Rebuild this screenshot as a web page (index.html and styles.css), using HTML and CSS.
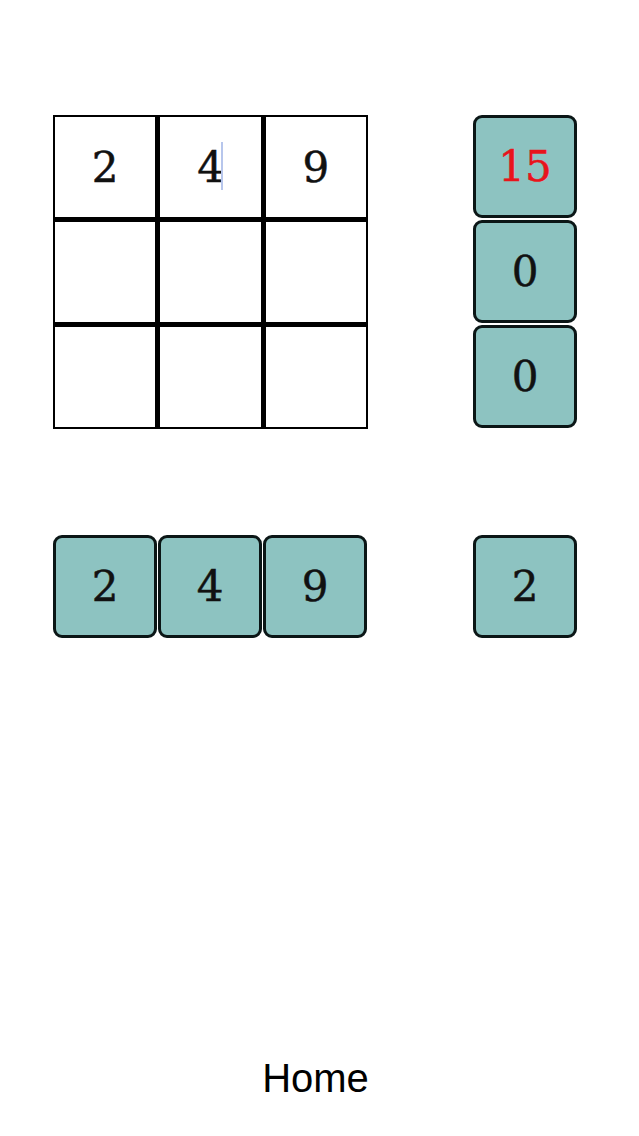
FILE: index.html
```html
<!DOCTYPE html>
<html>
<head>
<meta charset="utf-8">
<link rel="stylesheet" href="styles.css">
</head>
<body>
<main class="page">
  <section class="top">
    <div class="grid">
      <div class="cell">2</div>
      <div class="cell">4<span class="caret"></span></div>
      <div class="cell">9</div>
      <div class="cell"></div>
      <div class="cell"></div>
      <div class="cell"></div>
      <div class="cell"></div>
      <div class="cell"></div>
      <div class="cell"></div>
    </div>
    <div class="col">
      <div class="tile red">15</div>
      <div class="tile">0</div>
      <div class="tile">0</div>
    </div>
  </section>
  <section class="bottom">
    <div class="row">
      <div class="tile">2</div>
      <div class="tile">4</div>
      <div class="tile">9</div>
    </div>
    <div class="tile single">2</div>
  </section>
  <div class="spacer"></div>
  <footer class="home">Home</footer>
</main>
</body>
</html>
```
FILE: styles.css
```css
html, body {
  margin: 0;
  padding: 0;
  background: #ffffff;
}
.page {
  width: 639px;
  height: 1136px;
  display: flex;
  flex-direction: column;
  box-sizing: border-box;
  padding: 115px 0 0 53px;
}
.top {
  display: flex;
  align-items: flex-start;
  gap: 105px;
}
.grid {
  box-sizing: border-box;
  width: 315px;
  height: 314px;
  border: 2px solid #000;
  background: #000;
  display: grid;
  grid-template-columns: repeat(3, 1fr);
  grid-template-rows: repeat(3, 1fr);
  gap: 5px;
}
.cell {
  background: #fff;
  display: flex;
  align-items: center;
  justify-content: center;
  font-family: "DejaVu Serif", serif;
  font-size: 42px;
  color: #111;
  -webkit-text-stroke: 0.5px #111;
  position: relative;
}
.caret {
  position: absolute;
  left: 61px;
  top: 25px;
  width: 2px;
  height: 48px;
  background: #b7c6ec;
}
.col {
  display: flex;
  flex-direction: column;
  gap: 2px;
}
.tile {
  box-sizing: border-box;
  width: 104px;
  height: 103px;
  border: 3px solid #0b1616;
  border-radius: 9px;
  background: #8dc3c1;
  display: flex;
  align-items: center;
  justify-content: center;
  font-family: "DejaVu Serif", serif;
  font-size: 42px;
  color: #111;
  -webkit-text-stroke: 0.5px #111;
}
.tile.red {
  color: #e8141c;
  -webkit-text-stroke: 0.5px #e8141c;
}
.bottom {
  margin-top: 106px;
  display: flex;
  align-items: flex-start;
  gap: 106px;
}
.row {
  display: flex;
  gap: 1px;
}
.spacer {
  flex: 1;
}
.home {
  margin-left: -53px;
  width: 631px;
  text-align: center;
  font-family: "Liberation Sans", Arial, sans-serif;
  font-size: 40px;
  line-height: 46px;
  color: #000;
  padding-bottom: 35px;
}
```
